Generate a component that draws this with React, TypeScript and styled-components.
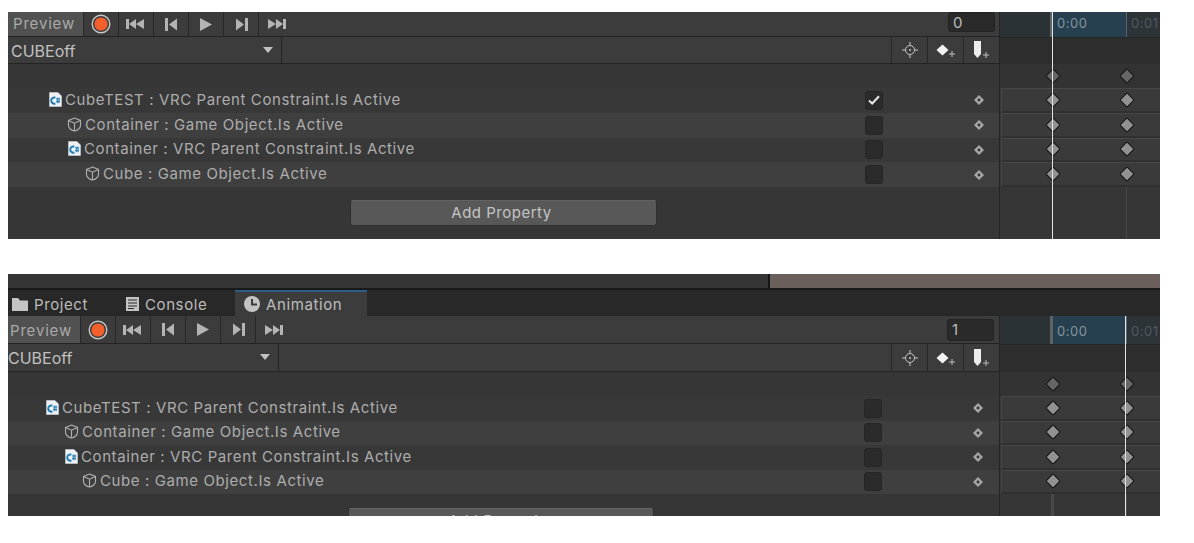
import styled, { createGlobalStyle } from 'styled-components';

const GlobalStyle = createGlobalStyle`
    html, body {
        margin: 0;
        background: #fff;
    }
    body {
        font-family: Inter, "Liberation Sans", sans-serif;
    }
`

const Page = styled.div`
    display: flex;
    flex-direction: column;
    gap: 35px;
    padding: 12px 34px 0 8px;
`

const Panel = styled.section<{ $height: number }>`
    display: flex;
    flex-direction: column;
    height: ${({ $height }) => $height}px;
    overflow: hidden;
    background: #363636;
`

const SceneStrip = styled.div`
    display: flex;
    flex: none;
    height: 14px;
    background: #353535;
    border-bottom: 2px solid #191919;
`

const SceneDark = styled.div`
    width: 760px;
    flex: none;
    border-right: 2px solid #161616;
`

const SceneView = styled.div`
    flex: 1;
    background: #6a5f5b;
`

const TabBar = styled.div`
    display: flex;
    flex: none;
    height: 26px;
    background: #282828;
`

const Tab = styled.div<{ $width: number; $inset: number; $active?: boolean }>`
    display: flex;
    align-items: center;
    gap: 6px;
    width: ${({ $width }) => $width}px;
    padding-left: ${({ $inset }) => $inset}px;
    box-sizing: border-box;
    font-size: 15px;
    letter-spacing: 0.6px;
    color: #bcbcbc;
    background: ${({ $active }) => ($active ? '#3c3c3c' : 'transparent')};
    border-top: 2px solid ${({ $active }) => ($active ? '#2c5d87' : 'transparent')};
`

const Columns = styled.div`
    display: grid;
    grid-template-columns: 992px 160px;
    flex: 1;
    min-height: 0;
`

const LeftColumn = styled.div`
    display: flex;
    flex-direction: column;
    border-right: 1px solid #252525;
    min-width: 0;
`

const RightColumn = styled.div`
    position: relative;
    display: flex;
    flex-direction: column;
    overflow: hidden;
`

const ToolBar = styled.div<{ $height: number }>`
    display: flex;
    flex: none;
    height: ${({ $height }) => $height}px;
    box-sizing: border-box;
    background: #3c3c3c;
    border-bottom: 1px solid #232323;
`

const PreviewButton = styled.div<{ $width: number; $inset: number; $nudge: number }>`
    display: flex;
    align-items: center;
    flex: none;
    width: ${({ $width }) => $width}px;
    padding-left: ${({ $inset }) => $inset}px;
    padding-top: ${({ $nudge }) => Math.max($nudge, 0)}px;
    padding-bottom: ${({ $nudge }) => Math.max(-$nudge, 0)}px;
    box-sizing: border-box;
    font-size: 15px;
    letter-spacing: 0.82px;
    color: #a9a9a9;
    background: #515151;
`

const ToolButton = styled.div`
    display: flex;
    align-items: center;
    justify-content: center;
    flex: none;
    width: 35px;
    box-sizing: border-box;
    border-left: 1px solid #272727;

    &:last-of-type {
        border-right: 1px solid #272727;
        width: 36px;
    }
`

const ToolSpacer = styled.div`
    flex: 1;
    display: flex;
    justify-content: flex-end;
    align-items: flex-start;
`

const FrameField = styled.div<{ $top: number; $height: number; $right: number }>`
    width: 47px;
    height: ${({ $height }) => $height}px;
    margin: ${({ $top }) => $top}px ${({ $right }) => $right}px 0 0;
    padding-left: 4px;
    box-sizing: border-box;
    font-size: 15px;
    line-height: 20px;
    color: #bdbdbd;
    background: #2a2a2a;
    border: 1px solid #232323;
    border-radius: 3px;
`

const ClipSelect = styled.div<{ $width: number; $caret: number; $inset: number }>`
    position: relative;
    display: flex;
    align-items: center;
    flex: none;
    width: ${({ $width }) => $width}px;
    padding: 1px 0 0 ${({ $inset }) => $inset}px;
    box-sizing: border-box;
    font-size: 16px;
    color: #c0c0c0;
    border-right: 1px solid #232323;

    &::after {
        content: '';
        position: absolute;
        left: ${({ $caret }) => $caret}px;
        top: 10px;
        border-left: 5px solid transparent;
        border-right: 5px solid transparent;
        border-top: 6px solid #c2c2c2;
    }
`

const KeyTools = styled.div`
    display: flex;
    margin-left: auto;
`

const KeyTool = styled.div`
    display: flex;
    align-items: center;
    justify-content: center;
    width: 35px;
    border-left: 1px solid #272727;
`

const PropertyList = styled.div`
    display: flex;
    flex-direction: column;
    flex: none;
    padding-top: 24px;
`

const PropertyRow = styled.div<{ $height: number; $even: boolean }>`
    display: flex;
    align-items: center;
    flex: none;
    height: ${({ $height }) => $height}px;
    background: ${({ $even }) => ($even ? '#3f3f3f' : '#383838')};
`

const PropertyName = styled.div<{ $indent: number }>`
    display: flex;
    align-items: center;
    flex: 1;
    gap: 3px;
    padding: 0 0 2px ${({ $indent }) => $indent}px;
    font-size: 15px;
    letter-spacing: 0.6px;
    white-space: nowrap;
    color: #adadad;
`

const Checkbox = styled.div`
    display: flex;
    align-items: center;
    justify-content: center;
    flex: none;
    width: 18px;
    height: 19px;
    box-sizing: border-box;
    background: #2b2b2b;
    border: 1px solid #262626;
    border-radius: 3px;
`

const KeyDotSlot = styled.div<{ $right: number }>`
    display: flex;
    justify-content: center;
    flex: none;
    width: 14px;
    margin-left: 89px;
    margin-right: ${({ $right }) => $right}px;
`

const AddBar = styled.div<{ $top: number; $shift: number }>`
    display: flex;
    justify-content: center;
    padding: ${({ $top }) => $top}px ${({ $shift }) => $shift}px 0 0;
`

const AddButton = styled.div<{ $width: number }>`
    display: flex;
    align-items: center;
    justify-content: center;
    flex: none;
    width: ${({ $width }) => $width}px;
    height: 26px;
    padding: 0 4px 2px 0;
    box-sizing: border-box;
    font-size: 15px;
    letter-spacing: 0.5px;
    color: #c4c4c4;
    background: #585858;
    border: 1px solid #2f2f2f;
    border-top-color: #636363;
    border-radius: 3px;
`

const Ruler = styled.div<{ $height: number; $nudge: number }>`
    display: flex;
    flex: none;
    height: ${({ $height }) => $height}px;
    box-sizing: border-box;
    background: #2c3438;

    & > * {
        padding-top: ${({ $nudge }) => Math.max($nudge, 0)}px;
        padding-bottom: ${({ $nudge }) => Math.max(-$nudge, 0)}px;
    }
`

const RulerLead = styled.div`
    width: 53px;
    flex: none;
    box-sizing: border-box;
    background: #2a3236;
    border-right: 3px solid #5f6366;
`

const RulerRange = styled.div`
    display: flex;
    align-items: center;
    flex: none;
    width: 74px;
    padding-left: 4px;
    box-sizing: border-box;
    font-size: 13px;
    letter-spacing: 0.5px;
    color: #84939d;
    background: #27404f;
    border-right: 1px solid #59666d;
`

const RulerTail = styled.div`
    display: flex;
    align-items: center;
    padding-left: 4px;
    font-size: 13px;
    letter-spacing: 0.5px;
    color: #505a60;
`

const EventLane = styled.div<{ $height: number }>`
    flex: none;
    height: ${({ $height }) => $height}px;
    background: #2d2d2d;
    border-top: 1px solid #272727;
    box-sizing: border-box;
`

const SummaryLane = styled.div`
    position: relative;
    flex: none;
    height: 24px;
    background: #333;
`

const TrackLane = styled.div<{ $height: number }>`
    position: relative;
    flex: none;
    height: ${({ $height }) => $height}px;
    margin-left: 1px;
    box-sizing: border-box;
    background: #3a3a3a;
    border: 1px solid #474747;
    border-right: none;
    border-bottom-width: 2px;
    border-bottom-color: #303030;
`

const Keyframe = styled.div<{ $x: number; $fill: string }>`
    position: absolute;
    top: 50%;
    left: ${({ $x }) => $x}px;
    width: 11px;
    height: 11px;
    box-sizing: border-box;
    background: ${({ $fill }) => $fill};
    border: 1.5px solid #141414;
    border-radius: 1.5px;
    transform: translate(-50%, -50%) rotate(45deg);
`

const TimeLine = styled.div<{ $x: number; $color: string; $width: number; $top: number }>`
    position: absolute;
    top: ${({ $top }) => $top}px;
    bottom: 0;
    left: ${({ $x }) => $x}px;
    width: ${({ $width }) => $width}px;
    background: ${({ $color }) => $color};
`

const IconSvg = styled.svg`
    display: block;
    flex: none;
`

const RecordIcon = () => (
    <IconSvg width="20" height="20" viewBox="0 0 20 20">
        <circle cx="10" cy="10" r="8.8" fill="none" stroke="#c9c9c9" strokeWidth="1.4" />
        <circle cx="10" cy="10" r="6.6" fill="#f4602c" />
    </IconSvg>
)

const FirstIcon = () => (
    <IconSvg width="20" height="12" viewBox="0 0 20 12" fill="#b4b4b4">
        <rect x="0" y="1" width="3" height="10" />
        <path d="M3 6l7-5v10zM10 6l8-5v10z" />
    </IconSvg>
)

const PrevIcon = () => (
    <IconSvg width="13" height="13" viewBox="0 0 13 13" fill="#b4b4b4">
        <rect x="0" y="0" width="3" height="13" />
        <path d="M4 6.5l8-6v12z" />
    </IconSvg>
)

const PlayIcon = () => (
    <IconSvg width="12" height="13" viewBox="0 0 12 13" fill="#b4b4b4">
        <path d="M0 0l12 6.5-12 6.5z" />
    </IconSvg>
)

const NextIcon = () => (
    <IconSvg width="13" height="13" viewBox="0 0 13 13" fill="#b4b4b4">
        <rect x="10" y="0" width="3" height="13" />
        <path d="M9 6.5l-8-6v12z" />
    </IconSvg>
)

const LastIcon = () => (
    <IconSvg width="20" height="12" viewBox="0 0 20 12" fill="#b4b4b4">
        <rect x="17" y="1" width="3" height="10" />
        <path d="M17 6l-7-5v10zM10 6l-8-5v10z" />
    </IconSvg>
)

const CrosshairIcon = () => (
    <IconSvg width="16" height="16" viewBox="0 0 16 16" fill="none" stroke="#c8c8c8">
        <circle cx="8" cy="8" r="4.5" />
        <path d="M8 0v3.5M8 12.5V16M0 8h3.5M12.5 8H16" />
        <circle cx="8" cy="8" r="0.6" fill="#c8c8c8" />
    </IconSvg>
)

const AddKeyIcon = () => (
    <IconSvg width="20" height="14" viewBox="0 0 20 14">
        <path d="M6.5 1.5l6 5.5-6 5.5-6-5.5z" fill="#f2f2f2" />
        <path d="M16 8v6M13 11h6" stroke="#bdbdbd" />
    </IconSvg>
)

const AddEventIcon = () => (
    <IconSvg width="16" height="18" viewBox="0 0 16 18">
        <path d="M0 0h7v13l-3.5 4-3.5-4z" fill="#ececec" />
        <path d="M12 11v6M9 14h6" stroke="#bdbdbd" />
    </IconSvg>
)

const ScriptIcon = () => (
    <IconSvg width="13" height="15" viewBox="0 0 13 15">
        <path d="M0.5 0.5h8.5l3.5 3.5v10.5H0.5z" fill="#eef2f5" stroke="#ccd5da" strokeWidth="0.6" />
        <path d="M6.4 5.7A3.1 3.1 0 1 0 6.4 11.5" fill="none" stroke="#1b7ab2" strokeWidth="1.9" />
        <path d="M7.2 7h4M7 9.6h4M8.3 5.6v5.6M10 5.6v5.6" stroke="#1b7ab2" strokeWidth="0.95" />
    </IconSvg>
)

const CubeIcon = () => (
    <IconSvg width="15" height="15" viewBox="0 0 15 15" fill="none" stroke="#b0b0b0" strokeWidth="1.1">
        <path d="M7.5 1L13.5 3.4V8.5C13.5 11 10.5 13.4 7.5 14 4.5 13.4 1.5 11 1.5 8.5V3.4z" />
        <path d="M1.5 3.4L7.5 6.2 13.5 3.4M7.5 6.2V14" />
    </IconSvg>
)

const KeyDot = () => (
    <IconSvg width="10" height="10" viewBox="0 0 10 10">
        <path d="M5 0L10 5 5 10 0 5z" fill="#a6a6a6" />
        <circle cx="5" cy="5" r="1.4" fill="#333" />
    </IconSvg>
)

const CheckMark = () => (
    <IconSvg width="12" height="10" viewBox="0 0 12 10" fill="none" stroke="#e6e6e6" strokeWidth="2">
        <path d="M1 5.5L4.2 8.5 11 1.2" />
    </IconSvg>
)

const FolderIcon = () => (
    <IconSvg width="16" height="13" viewBox="0 0 16 13" fill="#c4c4c4">
        <path d="M0 0h6l2 2.5h8V13H0z" />
    </IconSvg>
)

const ConsoleIcon = () => (
    <IconSvg width="13" height="14" viewBox="0 0 13 14">
        <rect width="13" height="14" fill="#c4c4c4" />
        <path d="M2 3h9M2 6h9M2 9h9M2 11.5h6" stroke="#282828" />
    </IconSvg>
)

const ClockIcon = () => (
    <IconSvg width="16" height="16" viewBox="0 0 16 16">
        <circle cx="8" cy="8" r="8" fill="#c4c4c4" />
        <path d="M8 3v5.5h5" fill="none" stroke="#3c3c3c" strokeWidth="2" />
    </IconSvg>
)

type PanelConfig = {
    height: number
    frame: string
    previewWidth: number
    previewInset: number
    previewNudge: number
    rulerNudge: number
    clipWidth: number
    clipInset: number
    caret: number
    rowHeight: number
    toolHeight: number
    clipHeight: number
    fieldTop: number
    fieldHeight: number
    fieldRight: number
    baseIndent: number
    checkRight: number
    addTop: number
    addShift: number
    addWidth: number
    playhead: number
    tickWidth: number
    checked: boolean
    showTabs: boolean
}

const properties = [
    { name: 'CubeTEST : VRC Parent Constraint.Is Active', script: true, indent: 0 },
    { name: 'Container : Game Object.Is Active', script: false, indent: 18 },
    { name: 'Container : VRC Parent Constraint.Is Active', script: true, indent: 19 },
    { name: 'Cube : Game Object.Is Active', script: false, indent: 36 },
]

const firstPanel: PanelConfig = {
    height: 227,
    frame: '0',
    previewWidth: 75,
    previewInset: 5,
    previewNudge: -2,
    rulerNudge: -3,
    clipWidth: 274,
    clipInset: 3,
    caret: 255,
    rowHeight: 24.75,
    toolHeight: 25,
    clipHeight: 27,
    fieldTop: 0,
    fieldHeight: 20,
    fieldRight: 4,
    baseIndent: 41,
    checkRight: 13,
    addTop: 13,
    addShift: 0,
    addWidth: 307,
    playhead: 52,
    tickWidth: 1,
    checked: true,
    showTabs: false,
}

const secondPanel: PanelConfig = {
    height: 242,
    frame: '1',
    previewWidth: 72,
    previewInset: 2,
    previewNudge: 2,
    rulerNudge: 1,
    clipWidth: 271,
    clipInset: 0,
    caret: 252,
    rowHeight: 24.5,
    toolHeight: 28,
    clipHeight: 28,
    fieldTop: 3,
    fieldHeight: 22,
    fieldRight: 5,
    baseIndent: 38,
    checkRight: 14,
    addTop: 14,
    addShift: 6,
    addWidth: 306,
    playhead: 125,
    tickWidth: 3,
    checked: false,
    showTabs: true,
}

const AnimationPanel = ({ config }: { config: PanelConfig }) => {
    const keyXs = [52.5, 126.5]
    const laneBottom = config.toolHeight + config.clipHeight + 24 + config.rowHeight * 4
    return (
        <Panel $height={config.height}>
            {config.showTabs && (
                <>
                    <SceneStrip>
                        <SceneDark />
                        <SceneView />
                    </SceneStrip>
                    <TabBar>
                        <Tab $width={116} $inset={4}><FolderIcon />Project</Tab>
                        <Tab $width={111} $inset={2}><ConsoleIcon />Console</Tab>
                        <Tab $width={132} $inset={9} $active><ClockIcon />Animation</Tab>
                    </TabBar>
                </>
            )}
            <Columns>
                <LeftColumn>
                    <ToolBar $height={config.toolHeight}>
                        <PreviewButton $width={config.previewWidth} $inset={config.previewInset} $nudge={config.previewNudge}>Preview</PreviewButton>
                        <ToolButton><RecordIcon /></ToolButton>
                        <ToolButton><FirstIcon /></ToolButton>
                        <ToolButton><PrevIcon /></ToolButton>
                        <ToolButton><PlayIcon /></ToolButton>
                        <ToolButton><NextIcon /></ToolButton>
                        <ToolButton><LastIcon /></ToolButton>
                        <ToolSpacer>
                            <FrameField $top={config.fieldTop} $height={config.fieldHeight} $right={config.fieldRight}>{config.frame}</FrameField>
                        </ToolSpacer>
                    </ToolBar>
                    <ToolBar $height={config.clipHeight}>
                        <ClipSelect $width={config.clipWidth} $caret={config.caret} $inset={config.clipInset}>CUBEoff</ClipSelect>
                        <KeyTools>
                            <KeyTool><CrosshairIcon /></KeyTool>
                            <KeyTool><AddKeyIcon /></KeyTool>
                            <KeyTool><AddEventIcon /></KeyTool>
                        </KeyTools>
                    </ToolBar>
                    <PropertyList>
                        {properties.map((property, index) => (
                            <PropertyRow key={index} $height={config.rowHeight} $even={index % 2 === 1}>
                                <PropertyName $indent={config.baseIndent + property.indent}>
                                    {property.script ? <ScriptIcon /> : <CubeIcon />}
                                    {property.name}
                                </PropertyName>
                                <Checkbox>{config.checked && index === 0 && <CheckMark />}</Checkbox>
                                <KeyDotSlot $right={config.checkRight}><KeyDot /></KeyDotSlot>
                            </PropertyRow>
                        ))}
                    </PropertyList>
                    <AddBar $top={config.addTop} $shift={config.addShift}>
                        <AddButton $width={config.addWidth}>Add Property</AddButton>
                    </AddBar>
                </LeftColumn>
                <RightColumn>
                    <Ruler $height={config.toolHeight} $nudge={config.rulerNudge}>
                        <RulerLead />
                        <RulerRange>0:00</RulerRange>
                        <RulerTail>0:01</RulerTail>
                    </Ruler>
                    <EventLane $height={config.clipHeight} />
                    <SummaryLane>
                        {keyXs.map((x) => <Keyframe key={x} $x={x} $fill="#666" />)}
                    </SummaryLane>
                    {properties.map((property) => (
                        <TrackLane key={property.name} $height={config.rowHeight}>
                            {keyXs.map((x) => <Keyframe key={x} $x={x - 2} $fill="#929292" />)}
                        </TrackLane>
                    ))}
                    <TimeLine $x={config.tickWidth === 3 ? 51 : 52} $color="#494949" $width={config.tickWidth} $top={laneBottom} />
                    <TimeLine $x={126} $color="#494949" $width={1} $top={laneBottom} />
                    <TimeLine $x={config.playhead} $color="#e2e2e2" $width={1} $top={0} />
                </RightColumn>
            </Columns>
        </Panel>
    )
}

export default function App() {
    return (
        <>
            <GlobalStyle />
            <Page>
                <AnimationPanel config={firstPanel} />
                <AnimationPanel config={secondPanel} />
            </Page>
        </>
    )
}
